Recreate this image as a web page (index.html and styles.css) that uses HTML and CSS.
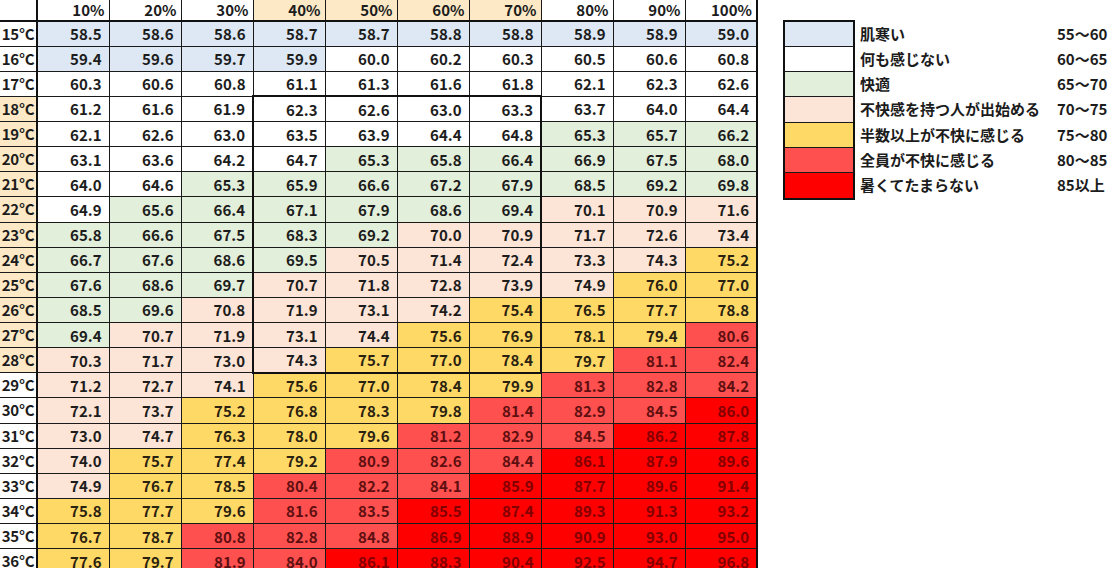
FILE: index.html
```html
<!DOCTYPE html>
<html lang="ja">
<head>
<meta charset="utf-8">
<title>不快指数表</title>
<link rel="stylesheet" href="styles.css">
</head>
<body>
<div class="page">
<table class="di">
<colgroup><col class="c-label"><col><col><col><col><col><col><col><col><col><col></colgroup>
<thead>
<tr class="head"><th class="corner"></th><th>10%</th><th>20%</th><th>30%</th><th class="hl">40%</th><th class="hl">50%</th><th class="hl">60%</th><th class="hl">70%</th><th>80%</th><th>90%</th><th>100%</th></tr>
</thead>
<tbody>
<tr><th>15°C</th><td class="b">58.5</td><td class="b">58.6</td><td class="b">58.6</td><td class="b">58.7</td><td class="b">58.7</td><td class="b">58.8</td><td class="b">58.8</td><td class="b">58.9</td><td class="b">58.9</td><td class="b">59.0</td></tr>
<tr><th>16°C</th><td class="b">59.4</td><td class="b">59.6</td><td class="b">59.7</td><td class="b">59.9</td><td class="w">60.0</td><td class="w">60.2</td><td class="w">60.3</td><td class="w">60.5</td><td class="w">60.6</td><td class="w">60.8</td></tr>
<tr><th>17°C</th><td class="w">60.3</td><td class="w">60.6</td><td class="w">60.8</td><td class="w">61.1</td><td class="w">61.3</td><td class="w">61.6</td><td class="w">61.8</td><td class="w">62.1</td><td class="w">62.3</td><td class="w">62.6</td></tr>
<tr class="hot top"><th>18°C</th><td class="w">61.2</td><td class="w">61.6</td><td class="w">61.9</td><td class="w">62.3</td><td class="w">62.6</td><td class="w">63.0</td><td class="w">63.3</td><td class="w">63.7</td><td class="w">64.0</td><td class="w">64.4</td></tr>
<tr class="hot"><th>19°C</th><td class="w">62.1</td><td class="w">62.6</td><td class="w">63.0</td><td class="w">63.5</td><td class="w">63.9</td><td class="w">64.4</td><td class="w">64.8</td><td class="g">65.3</td><td class="g">65.7</td><td class="g">66.2</td></tr>
<tr class="hot"><th>20°C</th><td class="w">63.1</td><td class="w">63.6</td><td class="w">64.2</td><td class="w">64.7</td><td class="g">65.3</td><td class="g">65.8</td><td class="g">66.4</td><td class="g">66.9</td><td class="g">67.5</td><td class="g">68.0</td></tr>
<tr class="hot"><th>21°C</th><td class="w">64.0</td><td class="w">64.6</td><td class="g">65.3</td><td class="g">65.9</td><td class="g">66.6</td><td class="g">67.2</td><td class="g">67.9</td><td class="g">68.5</td><td class="g">69.2</td><td class="g">69.8</td></tr>
<tr class="hot"><th>22°C</th><td class="w">64.9</td><td class="g">65.6</td><td class="g">66.4</td><td class="g">67.1</td><td class="g">67.9</td><td class="g">68.6</td><td class="g">69.4</td><td class="p">70.1</td><td class="p">70.9</td><td class="p">71.6</td></tr>
<tr class="hot"><th>23°C</th><td class="g">65.8</td><td class="g">66.6</td><td class="g">67.5</td><td class="g">68.3</td><td class="g">69.2</td><td class="p">70.0</td><td class="p">70.9</td><td class="p">71.7</td><td class="p">72.6</td><td class="p">73.4</td></tr>
<tr class="hot"><th>24°C</th><td class="g">66.7</td><td class="g">67.6</td><td class="g">68.6</td><td class="g">69.5</td><td class="p">70.5</td><td class="p">71.4</td><td class="p">72.4</td><td class="p">73.3</td><td class="p">74.3</td><td class="y">75.2</td></tr>
<tr class="hot"><th>25°C</th><td class="g">67.6</td><td class="g">68.6</td><td class="g">69.7</td><td class="p">70.7</td><td class="p">71.8</td><td class="p">72.8</td><td class="p">73.9</td><td class="p">74.9</td><td class="y">76.0</td><td class="y">77.0</td></tr>
<tr class="hot"><th>26°C</th><td class="g">68.5</td><td class="g">69.6</td><td class="p">70.8</td><td class="p">71.9</td><td class="p">73.1</td><td class="p">74.2</td><td class="y">75.4</td><td class="y">76.5</td><td class="y">77.7</td><td class="y">78.8</td></tr>
<tr class="hot"><th>27°C</th><td class="g">69.4</td><td class="p">70.7</td><td class="p">71.9</td><td class="p">73.1</td><td class="p">74.4</td><td class="y">75.6</td><td class="y">76.9</td><td class="y">78.1</td><td class="y">79.4</td><td class="r">80.6</td></tr>
<tr class="hot bot"><th>28°C</th><td class="p">70.3</td><td class="p">71.7</td><td class="p">73.0</td><td class="p">74.3</td><td class="y">75.7</td><td class="y">77.0</td><td class="y">78.4</td><td class="y">79.7</td><td class="r">81.1</td><td class="r">82.4</td></tr>
<tr><th>29°C</th><td class="p">71.2</td><td class="p">72.7</td><td class="p">74.1</td><td class="y">75.6</td><td class="y">77.0</td><td class="y">78.4</td><td class="y">79.9</td><td class="r">81.3</td><td class="r">82.8</td><td class="r">84.2</td></tr>
<tr><th>30°C</th><td class="p">72.1</td><td class="p">73.7</td><td class="y">75.2</td><td class="y">76.8</td><td class="y">78.3</td><td class="y">79.8</td><td class="r">81.4</td><td class="r">82.9</td><td class="r">84.5</td><td class="rr">86.0</td></tr>
<tr><th>31°C</th><td class="p">73.0</td><td class="p">74.7</td><td class="y">76.3</td><td class="y">78.0</td><td class="y">79.6</td><td class="r">81.2</td><td class="r">82.9</td><td class="r">84.5</td><td class="rr">86.2</td><td class="rr">87.8</td></tr>
<tr><th>32°C</th><td class="p">74.0</td><td class="y">75.7</td><td class="y">77.4</td><td class="y">79.2</td><td class="r">80.9</td><td class="r">82.6</td><td class="r">84.4</td><td class="rr">86.1</td><td class="rr">87.9</td><td class="rr">89.6</td></tr>
<tr><th>33°C</th><td class="p">74.9</td><td class="y">76.7</td><td class="y">78.5</td><td class="r">80.4</td><td class="r">82.2</td><td class="r">84.1</td><td class="rr">85.9</td><td class="rr">87.7</td><td class="rr">89.6</td><td class="rr">91.4</td></tr>
<tr><th>34°C</th><td class="y">75.8</td><td class="y">77.7</td><td class="y">79.6</td><td class="r">81.6</td><td class="r">83.5</td><td class="rr">85.5</td><td class="rr">87.4</td><td class="rr">89.3</td><td class="rr">91.3</td><td class="rr">93.2</td></tr>
<tr><th>35°C</th><td class="y">76.7</td><td class="y">78.7</td><td class="r">80.8</td><td class="r">82.8</td><td class="r">84.8</td><td class="rr">86.9</td><td class="rr">88.9</td><td class="rr">90.9</td><td class="rr">93.0</td><td class="rr">95.0</td></tr>
<tr><th>36°C</th><td class="y">77.6</td><td class="y">79.7</td><td class="r">81.9</td><td class="r">84.0</td><td class="rr">86.1</td><td class="rr">88.3</td><td class="rr">90.4</td><td class="rr">92.5</td><td class="rr">94.7</td><td class="rr">96.8</td></tr>
</tbody>
</table>

<div class="legend">
  <div class="swatches">
    <div class="sw b"></div>
    <div class="sw w"></div>
    <div class="sw g"></div>
    <div class="sw p"></div>
    <div class="sw y"></div>
    <div class="sw r"></div>
    <div class="sw rr"></div>
  </div>
  <div class="labels">
    <div class="lb">肌寒い</div>
    <div class="lb">何も感じない</div>
    <div class="lb">快適</div>
    <div class="lb">不快感を持つ人が出始める</div>
    <div class="lb">半数以上が不快に感じる</div>
    <div class="lb">全員が不快に感じる</div>
    <div class="lb">暑くてたまらない</div>
  </div>
  <div class="ranges">
    <div class="lb">55〜60</div>
    <div class="lb">60〜65</div>
    <div class="lb">65〜70</div>
    <div class="lb">70〜75</div>
    <div class="lb">75〜80</div>
    <div class="lb">80〜85</div>
    <div class="lb">85以上</div>
  </div>
</div>
</div>
</body>
</html>
```

FILE: styles.css
```css
html, body {
  margin: 0;
  padding: 0;
  background: #ffffff;
  overflow: hidden;
}

.page {
  display: flex;
  align-items: flex-start;
  width: 1115px;
  height: 568px;
  overflow: hidden;
  font-family: "Noto Sans CJK JP", "Noto Sans", sans-serif;
  font-weight: 700;
  font-size: 15px;
  color: #1c1c1c;
}

.di {
  border-collapse: collapse;
  table-layout: fixed;
  width: 758px;
  flex: none;
}

.di col { width: 72px; }
.di col.c-label { width: 37px; }

.di th,
.di td {
  border: 1px solid #1a1a1a;
  padding: 0;
  height: 25.14px;
  line-height: 18px;
  white-space: nowrap;
  overflow: hidden;
  box-sizing: border-box;
}

.di td {
  text-align: right;
  padding-right: 7px;
  padding-top: 1px;
}

.di tbody th {
  text-align: center;
  font-weight: 700;
  border-left: none;
  border-right: 2px solid #111;
  letter-spacing: -0.3px;
}

.di thead th {
  height: 21px;
  border-top: none;
  border-bottom: 2px solid #111;
  text-align: right;
  padding-right: 4px;
  font-weight: 700;
  background: #fff;
}

.di thead th.corner {
  border-left: none;
  border-right: 2px solid #111;
}

.di thead th.hl { background: #fde9c6; }

.di tr > :last-child { border-right: 2px solid #111; }

/* summer box: 40%–70% × 18°C–28°C */
.di tr.hot > th { background: #fde9c6; }
.di tr.hot > :nth-child(5) { border-left: 2px solid #111; }
.di tr.hot > :nth-child(8) { border-right: 2px solid #111; }
.di tr.top > :nth-child(n+5):nth-child(-n+8) { border-top: 2px solid #111; }
.di tr.bot > :nth-child(n+5):nth-child(-n+8) { border-bottom: 2px solid #111; }

/* value bands */
.b  { background: #dde8f4; }
.w  { background: #ffffff; }
.g  { background: #e2efda; }
.p  { background: #fce4d6; }
.y  { background: #ffd966; color: #2a2210; }
.r  { background: #ff5050; color: #5e0f0f; }
.rr { background: #ff0000; color: #820000; }

/* legend */
.legend {
  display: flex;
  margin-left: 25px;
  margin-top: 20px;
  flex: none;
}

.swatches {
  width: 68px;
  border: 2px solid #111;
  display: flex;
  flex-direction: column;
}

.sw {
  height: 24.14px;
  border-bottom: 1px solid #1a1a1a;
}
.sw:last-child { border-bottom: none; height: 25px; }

.labels {
  width: 197px;
  padding-left: 5px;
  padding-top: 1px;
}

.ranges {
  padding-top: 1px;
}

.lb {
  height: 25.14px;
  line-height: 25px;
  white-space: nowrap;
}
```
